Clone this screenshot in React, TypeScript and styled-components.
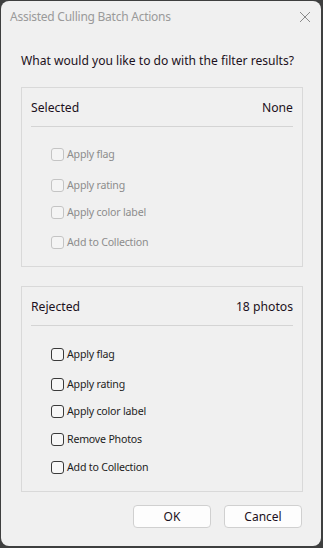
import React from 'react'
import styled, { createGlobalStyle } from 'styled-components'

const GlobalStyle = createGlobalStyle`
  html, body {
    margin: 0;
    padding: 0;
    background: #3e3f3f;
  }
  body {
    font-family: 'Noto Sans', 'Open Sans', sans-serif;
    font-size: 12px;
  }
`

const Dialog = styled.div`
  display: flex;
  flex-direction: column;
  width: 320px;
  height: 545px;
  margin: 1px;
  background: #f0f0f0;
  border-radius: 8px;
  box-sizing: border-box;
  overflow: hidden;
`

const TitleBar = styled.div`
  display: flex;
  align-items: center;
  justify-content: space-between;
  height: 31px;
  padding: 0 9px 0 9px;
`

const Title = styled.span`
  color: #9a9a9a;
  font-size: 12px;
  letter-spacing: -0.25px;
`

const CloseIcon = styled.svg`
  width: 12px;
  height: 12px;
  margin-right: 1px;
`

const Question = styled.div`
  margin: 21px 0 0 20px;
  line-height: 16px;
  color: #1c1020;
  font-size: 12.1px;
`

const Group = styled.div<{ $top: number }>`
  margin: ${p => p.$top}px 18px 0 20px;
  border: 1px solid #d9d9d9;
  padding: 12px 9px 14px 9px;
`

const GroupHeader = styled.div`
  display: flex;
  justify-content: space-between;
  line-height: 16px;
  font-size: 12.2px;
  color: #1c1020;
  padding-bottom: 10px;
  border-bottom: 1px solid #d4d4d4;
`

const Row = styled.label<{ $top: number; $disabled?: boolean }>`
  display: flex;
  align-items: center;
  height: 20px;
  margin: ${p => p.$top}px 0 0 20px;
  font-size: 10.6px;
  letter-spacing: -0.2px;
  color: ${p => (p.$disabled ? '#8c8c8c' : '#1c1c1c')};
`

const Box = styled.span<{ $disabled?: boolean }>`
  width: 13px;
  height: 13px;
  box-sizing: border-box;
  border: 1px solid ${p => (p.$disabled ? '#c4c4c4' : '#3a3a3a')};
  border-radius: 3px;
  background: ${p => (p.$disabled ? '#f4f4f4' : '#f7f7f7')};
  margin-right: 3px;
`

const Footer = styled.div`
  display: flex;
  justify-content: flex-end;
  gap: 13px;
  margin: 13px 19px 0 0;
`

const Button = styled.button`
  width: 78px;
  height: 23px;
  background: #fdfdfd;
  border: 1px solid #d0d0d0;
  border-radius: 4px;
  font-family: 'Noto Sans', 'Open Sans', sans-serif;
  font-size: 12px;
  color: #1c1020;
  padding: 0;
`

type Item = { label: string; top: number }

const selectedItems: Item[] = [
  { label: 'Apply flag', top: 17 },
  { label: 'Apply rating', top: 11 },
  { label: 'Apply color label', top: 7 },
  { label: 'Add to Collection', top: 10 },
]

const rejectedItems: Item[] = [
  { label: 'Apply flag', top: 18 },
  { label: 'Apply rating', top: 10 },
  { label: 'Apply color label', top: 7 },
  { label: 'Remove Photos', top: 8 },
  { label: 'Add to Collection', top: 8 },
]

function CheckGroup({
  name,
  count,
  items,
  disabled,
  top,
}: {
  name: string
  count: string
  items: Item[]
  disabled?: boolean
  top: number
}) {
  return (
    <Group $top={top}>
      <GroupHeader>
        <span>{name}</span>
        <span>{count}</span>
      </GroupHeader>
      {items.map(it => (
        <Row key={it.label} $top={it.top} $disabled={disabled}>
          <Box $disabled={disabled} />
          {it.label}
        </Row>
      ))}
    </Group>
  )
}

export default function App() {
  return (
    <>
      <GlobalStyle />
      <Dialog>
        <TitleBar>
          <Title>Assisted Culling Batch Actions</Title>
          <CloseIcon viewBox="0 0 12 12">
            <path d="M1 1L11 11M11 1L1 11" stroke="#8a8a8a" strokeWidth="1" fill="none" />
          </CloseIcon>
        </TitleBar>
        <Question>What would you like to do with the filter results?</Question>
        <CheckGroup name="Selected" count="None" items={selectedItems} disabled top={18} />
        <CheckGroup name="Rejected" count="18 photos" items={rejectedItems} top={19} />
        <Footer>
          <Button>OK</Button>
          <Button>Cancel</Button>
        </Footer>
      </Dialog>
    </>
  )
}
